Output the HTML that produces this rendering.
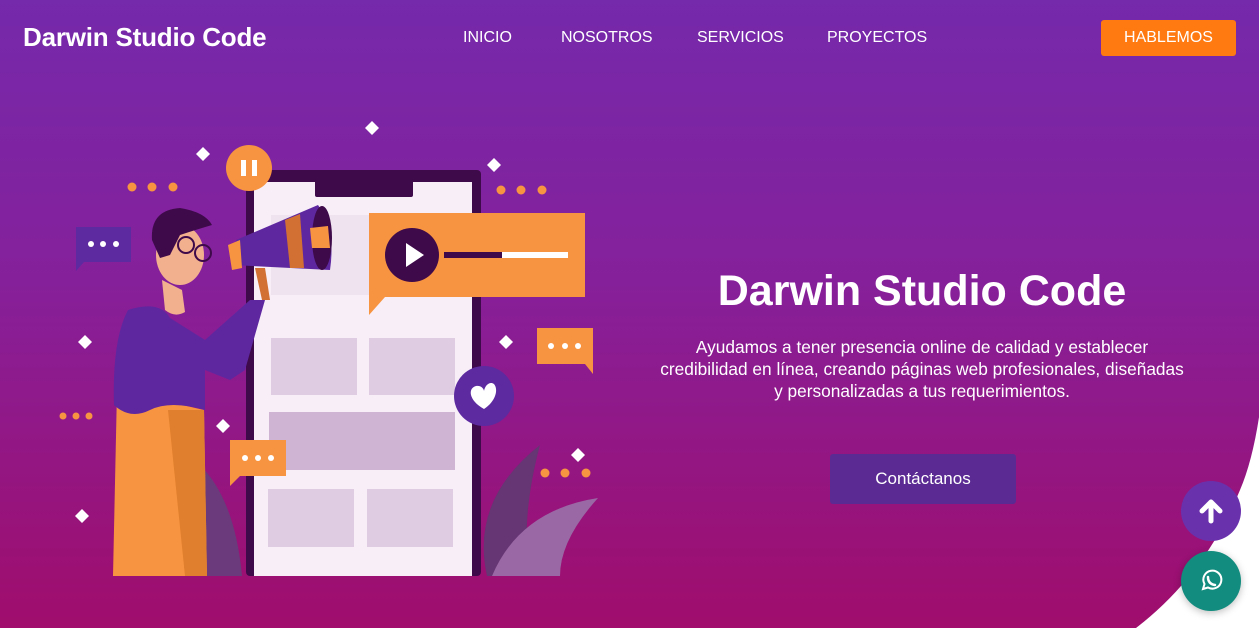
<!DOCTYPE html>
<html><head><meta charset="utf-8"><style>
*{margin:0;padding:0;box-sizing:border-box}
body{width:1259px;height:628px;overflow:hidden;position:relative;font-family:"Liberation Sans",sans-serif;background:linear-gradient(180deg,#7529ab 0%,#86209a 45%,#a00d6c 100%);color:#fff}
.logo{position:absolute;left:23px;top:22px;font-size:26px;font-weight:bold;letter-spacing:-0.2px}
.nav a{position:absolute;top:29px;font-size:16px;color:#fff;text-decoration:none}
.hb{position:absolute;left:1101px;top:20px;width:135px;height:36px;background:#ff7a10;border-radius:3px;font-size:16px;text-align:center;line-height:36px}
h1{position:absolute;left:522px;width:800px;text-align:center;top:267px;font-size:43px;font-weight:bold;letter-spacing:0px}
p{position:absolute;left:522px;width:800px;text-align:center;top:336px;font-size:17.3px;line-height:22px}
.ct{position:absolute;left:830px;top:454px;width:186px;height:50px;background:#5b2a93;border-radius:3px;text-align:center;line-height:50px;font-size:17px}
.up{position:absolute;left:1181px;top:481px;width:60px;height:60px;border-radius:50%;background:#6a31ad}
.wa{position:absolute;left:1181px;top:551px;width:60px;height:60px;border-radius:50%;background:#128c7e;box-shadow:0 2px 8px rgba(0,0,0,.25)}
</style></head><body>
<svg style="position:absolute;left:0;top:0" width="1259" height="628">
<path d="M1262,395 Q1255,455 1240,490 Q1205,575 1136,628 L1262,628Z" fill="#fff"/>
<path d="M205,576 Q185,510 200,465 Q235,500 242,576Z" fill="#6a3a7c"/>
<path d="M487,576 Q470,500 540,445 Q520,520 530,576Z" fill="#663573"/>
<path d="M492,576 Q520,510 598,498 Q560,540 560,576Z" fill="#9a68a4"/>
<rect x="246" y="170" width="235" height="406" rx="4" fill="#3e0a4a"/>
<rect x="254" y="182" width="218" height="394" fill="#f7eef8"/>
<rect x="315" y="180" width="98" height="17" rx="2" fill="#3e0a4a"/>
<rect x="271" y="215" width="184" height="80" fill="#efe3f0"/>
<rect x="271" y="338" width="86" height="57" fill="#dfcbe2"/>
<rect x="369" y="338" width="86" height="57" fill="#dfcbe2"/>
<rect x="269" y="412" width="186" height="58" fill="#cfb5d3"/>
<rect x="268" y="489" width="86" height="58" fill="#dfcbe2"/>
<rect x="367" y="489" width="86" height="58" fill="#dfcbe2"/>
<path d="M369,213 H585 V297 H385 L369,315Z" fill="#f79441"/>
<circle cx="412" cy="255" r="27" fill="#3e0a4a"/>
<path d="M406,243 L424,255 L406,267Z" fill="#fff"/>
<rect x="444" y="252" width="58" height="6" fill="#3e0a4a"/>
<rect x="502" y="252" width="66" height="6" fill="#fff"/>
<circle cx="249" cy="168" r="23" fill="#f79441"/>
<rect x="241" y="160" width="5" height="16" fill="#fff"/><rect x="252" y="160" width="5" height="16" fill="#fff"/>
<circle cx="484" cy="396" r="30" fill="#5d2aa0"/>
<path d="M484,409 C468,400 468,388 476,386 C481,385 484,389 484,391 C485,385 490,381 494,384 C499,390 495,402 484,409Z" fill="#fff"/>
<path d="M76,227 H131 V262 H84 L76,271Z" fill="#5d2aa0"/>
<circle cx="91" cy="244" r="3" fill="#fff"/><circle cx="103" cy="244" r="3" fill="#fff"/><circle cx="116" cy="244" r="3" fill="#fff"/>
<path d="M537,328 H593 V374 L585,364 H537Z" fill="#f79441"/>
<circle cx="551" cy="346" r="3" fill="#fff"/><circle cx="565" cy="346" r="3" fill="#fff"/><circle cx="578" cy="346" r="3" fill="#fff"/>
<path d="M230,440 H286 V476 H240 L230,486Z" fill="#f79441"/>
<circle cx="245" cy="458" r="3" fill="#fff"/><circle cx="258" cy="458" r="3" fill="#fff"/><circle cx="271" cy="458" r="3" fill="#fff"/>
<path d="M117,390 L113,576 H207 L204,410Z" fill="#f79441"/>
<path d="M168,410 L185,576 H207 L204,410Z" fill="#e07f2d"/>
<path d="M128,310 Q160,300 170,318 L205,340 L250,300 L265,300 L245,370 L230,380 L205,370 L205,410 Q170,400 150,410 Q130,420 114,405 Q112,340 128,310Z" fill="#5e27a0"/>
<path d="M162,280 L165,310 Q175,318 185,312 L182,290Z" fill="#f2b08f"/>
<ellipse cx="180" cy="255" rx="24" ry="30" fill="#f2b08f"/>
<path d="M152,240 Q150,210 180,208 Q205,212 212,225 Q195,230 180,235 L170,255 L160,258Z" fill="#3e0a4a"/>
<circle cx="186" cy="245" r="8" fill="none" stroke="#3e0a4a" stroke-width="2"/>
<circle cx="203" cy="253" r="8" fill="none" stroke="#3e0a4a" stroke-width="2"/>
<path d="M232,265 L236,240 L318,205 Q336,230 330,270 Z" fill="#5e27a0"/>
<path d="M228,245 L240,240 L242,268 L232,270Z" fill="#f79441"/>
<path d="M285,220 L300,214 L304,268 L290,268Z" fill="#d27034"/>
<ellipse cx="322" cy="238" rx="10" ry="32" fill="#3e0a4a"/>
<path d="M310,228 L328,226 L330,248 L312,248Z" fill="#f79441"/>
<path d="M255,268 L265,268 L270,300 L262,300Z" fill="#d27034"/>
<g fill="#fff">
<path d="M372,121 L379,128 L372,135 L365,128Z"/><path d="M203,147 L210,154 L203,161 L196,154Z"/>
<path d="M494,158 L501,165 L494,172 L487,165Z"/><path d="M85,335 L92,342 L85,349 L78,342Z"/>
<path d="M506,335 L513,342 L506,349 L499,342Z"/><path d="M223,419 L230,426 L223,433 L216,426Z"/>
<path d="M578,448 L585,455 L578,462 L571,455Z"/><path d="M82,509 L89,516 L82,523 L75,516Z"/>
</g>
<g fill="#f79441">
<circle cx="132" cy="187" r="4.5"/><circle cx="152" cy="187" r="4.5"/><circle cx="173" cy="187" r="4.5"/>
<circle cx="501" cy="190" r="4.5"/><circle cx="521" cy="190" r="4.5"/><circle cx="542" cy="190" r="4.5"/>
<circle cx="63" cy="416" r="3.5"/><circle cx="76" cy="416" r="3.5"/><circle cx="89" cy="416" r="3.5"/>
<circle cx="545" cy="473" r="4.5"/><circle cx="565" cy="473" r="4.5"/><circle cx="586" cy="473" r="4.5"/>
</g>
</svg>
<div class="logo">Darwin Studio Code</div>
<div class="nav"><a style="left:463px">INICIO</a><a style="left:561px">NOSOTROS</a><a style="left:697px">SERVICIOS</a><a style="left:827px">PROYECTOS</a></div>
<div class="hb">HABLEMOS</div>
<h1>Darwin Studio Code</h1>
<p>Ayudamos a tener presencia online de calidad y establecer<br>credibilidad en línea, creando páginas web profesionales, diseñadas<br>y personalizadas a tus requerimientos.</p>
<div class="ct">Contáctanos</div>
<div class="up"><svg width="60" height="60"><path d="M30,21 L30,40 M21,30 L30,21 L39,30" stroke="#fff" stroke-width="5" fill="none" stroke-linecap="round" stroke-linejoin="round"/></svg></div>
<div class="wa"><svg width="60" height="60"><path d="M22,38 L23.5,33 A9,9 0 1 1 27,36.5 Z" fill="none" stroke="#fff" stroke-width="2"/><path d="M27,26 Q27,33 34,34" stroke="#fff" stroke-width="2.5" fill="none" stroke-linecap="round"/></svg></div>
</body></html>
